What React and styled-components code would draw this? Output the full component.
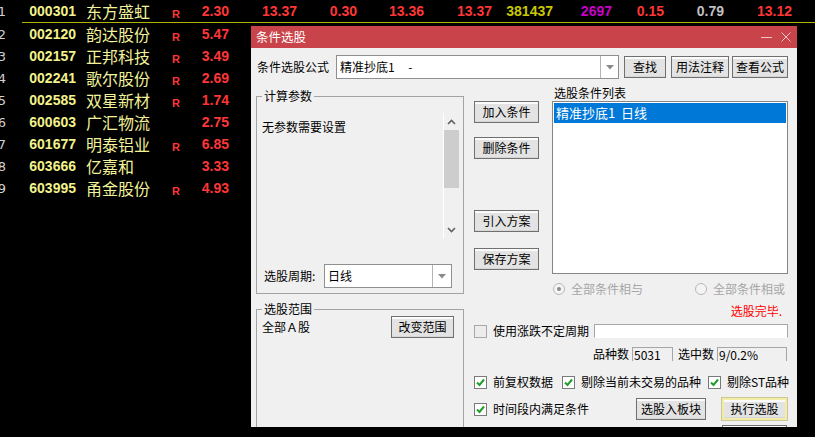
import React from 'react';
import styled, { createGlobalStyle } from 'styled-components';

const CJK = `"Noto Sans CJK SC", "Noto Sans", sans-serif`;

const GlobalStyle = createGlobalStyle`
  html, body {
    margin: 0;
    padding: 0;
    background: #000;
  }
  body {
    width: 815px;
    height: 437px;
    overflow: hidden;
  }
`;

const quotes = [
  { no: 1, code: '000301', name: '东方盛虹', r: true, price: '2.30' },
  { no: 2, code: '002120', name: '韵达股份', r: true, price: '5.47' },
  { no: 3, code: '002157', name: '正邦科技', r: true, price: '3.49' },
  { no: 4, code: '002241', name: '歌尔股份', r: true, price: '2.69' },
  { no: 5, code: '002585', name: '双星新材', r: true, price: '1.74' },
  { no: 6, code: '600603', name: '广汇物流', r: false, price: '2.75' },
  { no: 7, code: '601677', name: '明泰铝业', r: true, price: '6.85' },
  { no: 8, code: '603666', name: '亿嘉和', r: false, price: '3.33' },
  { no: 9, code: '603995', name: '甬金股份', r: true, price: '4.93' },
];

// extra columns only visible on the first row
const firstRowExtra = [
  { v: '13.37', c: '#ff3636' },
  { v: '0.30', c: '#ff3636' },
  { v: '13.36', c: '#ff3636' },
  { v: '13.37', c: '#ff3636' },
  { v: '381437', c: '#c8c800' },
  { v: '2697', c: '#c800c8' },
  { v: '0.15', c: '#ff3636' },
  { v: '0.79', c: '#c0c0c0' },
  { v: '13.12', c: '#ff3636' },
];

const Checkbox = ({ checked }) => (
  <CheckBox $checked={checked}>
    {checked && (
      <svg width="11" height="11" viewBox="0 0 11 11">
        <polyline points="2,5.5 4.5,8 9,2.5" fill="none" stroke="#1f9e2a" strokeWidth="2" />
      </svg>
    )}
  </CheckBox>
);

const Arrow = () => (
  <svg width="8" height="5" viewBox="0 0 8 5">
    <polygon points="0,0 8,0 4,4.5" fill="#8a8a8a" />
  </svg>
);

const Combo = ({ width, arrowWidth, children }) => (
  <ComboBox $w={width}>
    <ComboText>{children}</ComboText>
    <ComboArrow $w={arrowWidth}>
      <Arrow />
    </ComboArrow>
  </ComboBox>
);

const App = () => {
  return (
    <Screen>
      <GlobalStyle />
      <Quotes>
        {quotes.map((q, i) => (
          <React.Fragment key={q.code}>
            <QuoteRow>
              <RowNo>{q.no}</RowNo>
              <Code>{q.code}</Code>
              <Name>{q.name}</Name>
              <Flag>{q.r ? 'R' : ''}</Flag>
              <Num $c="#ff3636">{q.price}</Num>
              {i === 0 &&
                firstRowExtra.map((e, k) => (
                  <Num key={k} $c={e.c}>
                    {e.v}
                  </Num>
                ))}
            </QuoteRow>
            {i === 0 && <Divider />}
          </React.Fragment>
        ))}
      </Quotes>

      <Dialog>
        <TitleBar>
          <span>条件选股</span>
          <WinButtons>
            <svg width="11" height="11" viewBox="0 0 11 11">
              <line x1="0" y1="5.5" x2="11" y2="5.5" stroke="#f3c6c8" strokeWidth="1" />
            </svg>
            <svg width="10" height="10" viewBox="0 0 10 10">
              <line x1="0.5" y1="0.5" x2="9.5" y2="9.5" stroke="#f3c6c8" strokeWidth="1" />
              <line x1="9.5" y1="0.5" x2="0.5" y2="9.5" stroke="#f3c6c8" strokeWidth="1" />
            </svg>
          </WinButtons>
        </TitleBar>

        <Body>
          <FormulaRow>
            <FormulaLabel>条件选股公式</FormulaLabel>
            <Combo width={283} arrowWidth={17}>
              精准抄底1{'     '}-
            </Combo>
            <Btn $w={42} $ml={5}>查找</Btn>
            <Btn $w={58} $ml={5}>用法注释</Btn>
            <Btn $w={56} $ml={3}>查看公式</Btn>
          </FormulaRow>

          <Main>
            <LeftCol>
              <Group $h={198} $mt={11}>
                <GroupTitle>计算参数</GroupTitle>
                <ParamPanel>
                  <ParamText>无参数需要设置</ParamText>
                  <ScrollBar>
                    <ScrollArrow>
                      <svg width="9" height="6" viewBox="0 0 9 6">
                        <polyline points="1,5 4.5,1.5 8,5" fill="none" stroke="#606060" strokeWidth="1.6" />
                      </svg>
                    </ScrollArrow>
                    <Thumb />
                    <Track />
                    <ScrollArrow>
                      <svg width="9" height="6" viewBox="0 0 9 6">
                        <polyline points="1,1 4.5,4.5 8,1" fill="none" stroke="#606060" strokeWidth="1.6" />
                      </svg>
                    </ScrollArrow>
                  </ScrollBar>
                </ParamPanel>
                <PeriodRow>
                  <PeriodLabel>选股周期:</PeriodLabel>
                  <Combo width={128} arrowWidth={18}>
                    日线
                  </Combo>
                </PeriodRow>
              </Group>

              <Group $h={200} $mt={15}>
                <GroupTitle>选股范围</GroupTitle>
                <ScopeRow>
                  <span>全部Ａ股</span>
                  <Btn $w={63}>改变范围</Btn>
                </ScopeRow>
              </Group>
            </LeftCol>

            <RightCol>
              <Upper>
                <ActionCol>
                  <Btn $w={65} $mt={0}>加入条件</Btn>
                  <Btn $w={65} $mt={14}>删除条件</Btn>
                  <Btn $w={65} $mt={51}>引入方案</Btn>
                  <Btn $w={65} $mt={16}>保存方案</Btn>
                </ActionCol>
                <ListCol>
                  <ListLabel>选股条件列表</ListLabel>
                  <ListBox>
                    <ListItem $selected>精准抄底1{'  '}日线</ListItem>
                  </ListBox>
                </ListCol>
              </Upper>

              <RadioRow>
                <RadioOpt>
                  <Radio $checked />
                  全部条件相与
                </RadioOpt>
                <RadioOpt>
                  <Radio />
                  全部条件相或
                </RadioOpt>
              </RadioRow>

              <Status>选股完毕.</Status>

              <CycleRow>
                <Checkbox />
                <OptText>使用涨跌不定周期</OptText>
                <TextInput />
              </CycleRow>

              <CountRow>
                <span>品种数</span>
                <CountBox $w={41} $ml={3}>5031</CountBox>
                <CountLabel>选中数</CountLabel>
                <CountBox $w={70} $ml={3}>9/0.2%</CountBox>
              </CountRow>

              <OptRow>
                <Opt $w={88}>
                  <Checkbox checked />
                  <OptText>前复权数据</OptText>
                </Opt>
                <Opt $w={146}>
                  <Checkbox checked />
                  <OptText>剔除当前未交易的品种</OptText>
                </Opt>
                <Opt>
                  <Checkbox checked />
                  <OptText>剔除ST品种</OptText>
                </Opt>
              </OptRow>

              <RunRow>
                <Opt>
                  <Checkbox checked />
                  <OptText>时间段内满足条件</OptText>
                </Opt>
                <RunButtons>
                  <Btn $w={70}>选股入板块</Btn>
                  <Btn $w={65} $default>执行选股</Btn>
                </RunButtons>
              </RunRow>

              <MoreRow>
                <Btn $w={65}>关闭</Btn>
              </MoreRow>
            </RightCol>
          </Main>
        </Body>
      </Dialog>
    </Screen>
  );
};

export default App;

const Screen = styled.div`
  position: relative;
  width: 815px;
  height: 437px;
  background: #000;
  overflow: hidden;
`;

const Quotes = styled.div`
  display: flex;
  flex-direction: column;
`;

const QuoteRow = styled.div`
  display: grid;
  grid-template-columns: 6px 70px 96px 18px 39px 68px 60px 67px 68px 61px 59px 52px 60px 68px;
  height: 22px;
  align-items: center;
  font: bold 14px 'Liberation Sans', Arial, sans-serif;
  white-space: nowrap;
`;

const Divider = styled.div`
  height: 1px;
  margin-left: 22px;
  background: #b4b400;
`;

const RowNo = styled.div`
  text-align: right;
  color: #d0d0d0;
  font-weight: normal;
  font-family: 'DejaVu Sans', sans-serif;
  font-size: 13px;
  direction: rtl;
`;

const Code = styled.div`
  text-align: right;
  color: #f2f28c;
`;

const Name = styled.div`
  padding-left: 10px;
  font: 16px ${CJK};
  line-height: 22px;
  color: #f2f29a;
`;

const Flag = styled.div`
  padding-top: 5px;
  font: bold 11px 'Liberation Sans', Arial, sans-serif;
  color: #ff3636;
`;

const Num = styled.div`
  text-align: right;
  color: ${(p) => p.$c};
`;

const Dialog = styled.div`
  position: absolute;
  left: 251px;
  top: 26px;
  width: 546px;
  height: 401px;
  background: #f0f0f0;
  overflow: hidden;
  display: flex;
  flex-direction: column;
  font: 12px ${CJK};
  color: #000;
`;

const TitleBar = styled.div`
  flex: none;
  height: 22px;
  display: flex;
  align-items: center;
  padding: 0 6px 0 5px;
  background: #c9444a;
  color: #fff;
  font-size: 12.5px;
  line-height: 22px;
`;

const WinButtons = styled.div`
  margin-left: auto;
  display: flex;
  align-items: center;
  gap: 9px;
`;

const Body = styled.div`
  padding: 0 9px 0 5px;
`;

const FormulaRow = styled.div`
  display: flex;
  align-items: center;
  height: 24px;
  margin-top: 7px;
`;

const FormulaLabel = styled.div`
  width: 80px;
  padding-left: 1px;
  box-sizing: border-box;
  line-height: 16px;
`;

const ComboBox = styled.div`
  box-sizing: border-box;
  width: ${(p) => p.$w}px;
  height: 24px;
  display: flex;
  background: #fff;
  border: 1px solid #8f8f8f;
  flex: none;
`;

const ComboText = styled.div`
  flex: 1;
  padding-left: 3px;
  line-height: 22px;
  white-space: pre;
`;

const ComboArrow = styled.div`
  width: ${(p) => p.$w}px;
  display: flex;
  align-items: center;
  justify-content: center;
  border-left: 1px solid #b4b4b4;
`;

const Btn = styled.button`
  box-sizing: border-box;
  flex: none;
  width: ${(p) => p.$w}px;
  height: 22px;
  margin: ${(p) => p.$mt || 0}px 0 0 ${(p) => p.$ml || 0}px;
  padding: 0;
  font: 12px ${CJK};
  line-height: 18px;
  color: #000;
  border: ${(p) => (p.$default ? '2px solid #f1eda6' : '1px solid #707070')};
  outline: ${(p) => (p.$default ? '1px solid #c9c79a' : 'none')};
  background: #e3e3e3;
  box-shadow: inset 0 2px 0 #fbfbfb, inset 0 -1px 0 #d6d6d6;
`;

const Main = styled.div`
  display: grid;
  grid-template-columns: 208px 314px;
  column-gap: 10px;
  margin-top: 6px;
`;

const LeftCol = styled.div`
  display: flex;
  flex-direction: column;
`;

const Group = styled.div`
  box-sizing: border-box;
  height: ${(p) => p.$h}px;
  margin-top: ${(p) => p.$mt}px;
  border: 1px solid #a3a3a3;
  display: flex;
  flex-direction: column;
  flex: none;
`;

const GroupTitle = styled.div`
  align-self: flex-start;
  height: 16px;
  line-height: 16px;
  margin: -9px 0 0 5px;
  padding: 0 2px;
  background: #f0f0f0;
`;

const ParamPanel = styled.div`
  display: flex;
  height: 125px;
  margin: 9px 4px 0 0;
`;

const ParamText = styled.div`
  flex: 1;
  padding: 5px 0 0 5px;
  line-height: 17px;
`;

const ScrollBar = styled.div`
  width: 15px;
  border-left: 1px solid #fff;
  display: flex;
  flex-direction: column;
`;

const ScrollArrow = styled.div`
  height: 17px;
  display: flex;
  align-items: center;
  justify-content: center;
`;

const Thumb = styled.div`
  height: 58px;
  background: #cdcdcd;
`;

const Track = styled.div`
  flex: 1;
`;

const PeriodRow = styled.div`
  display: flex;
  align-items: center;
  margin-top: 26px;
  height: 24px;
`;

const PeriodLabel = styled.div`
  box-sizing: border-box;
  width: 67px;
  padding-left: 7px;
  line-height: 16px;
`;

const ScopeRow = styled.div`
  display: flex;
  align-items: center;
  justify-content: space-between;
  margin-top: -1px;
  padding: 0 9px 0 5px;
  line-height: 16px;
`;

const RightCol = styled.div`
  display: flex;
  flex-direction: column;
`;

const Upper = styled.div`
  display: grid;
  grid-template-columns: 65px 236px;
  column-gap: 13px;
`;

const ActionCol = styled.div`
  display: flex;
  flex-direction: column;
  padding-top: 16px;
`;

const ListCol = styled.div`
  display: flex;
  flex-direction: column;
`;

const ListLabel = styled.div`
  height: 16px;
  line-height: 16px;
  padding-left: 2px;
`;

const ListBox = styled.div`
  box-sizing: border-box;
  height: 173px;
  border: 1px solid #868686;
  background: #fff;
  padding: 1px;
`;

const ListItem = styled.div`
  height: 20px;
  line-height: 20px;
  padding-left: 2px;
  font-size: 13px;
  white-space: pre;
  color: ${(p) => (p.$selected ? '#fff' : '#000')};
  background: ${(p) => (p.$selected ? '#0078d7' : 'transparent')};
`;

const RadioRow = styled.div`
  display: flex;
  justify-content: space-between;
  align-items: center;
  height: 16px;
  margin-top: 7px;
  padding: 0 3px 0 79px;
  color: #a6a6a6;
`;

const RadioOpt = styled.div`
  display: flex;
  align-items: center;
  gap: 6px;
  line-height: 16px;
`;

const Radio = styled.span`
  box-sizing: border-box;
  width: 12px;
  height: 12px;
  border-radius: 50%;
  border: 1px solid #b8b8b8;
  background: #f4f4f4;
  display: flex;
  align-items: center;
  justify-content: center;
  &::after {
    content: '';
    width: 4px;
    height: 4px;
    border-radius: 50%;
    background: ${(p) => (p.$checked ? '#8a8a8a' : 'transparent')};
  }
`;

const Status = styled.div`
  height: 16px;
  line-height: 16px;
  margin-top: 6px;
  padding-right: 6px;
  text-align: right;
  color: #ff0000;
`;

const CheckBox = styled.span`
  box-sizing: border-box;
  flex: none;
  width: 13px;
  height: 13px;
  display: flex;
  align-items: center;
  justify-content: center;
  border: 1px solid ${(p) => (p.$checked ? '#7a7a7a' : '#a8a8a8')};
  background: ${(p) => (p.$checked ? '#fff' : '#ececec')};
`;

const OptText = styled.span`
  margin-left: 6px;
  line-height: 14px;
  white-space: nowrap;
`;

const CycleRow = styled.div`
  display: flex;
  align-items: center;
  height: 14px;
  margin-top: 5px;
`;

const TextInput = styled.div`
  box-sizing: border-box;
  flex: 1;
  height: 14px;
  margin-left: 5px;
  border: 1px solid #a6a6a6;
  border-bottom-color: #fff;
  background: #fff;
`;

const CountRow = styled.div`
  display: flex;
  align-items: center;
  justify-content: flex-end;
  height: 14px;
  margin-top: 9px;
  padding-right: 1px;
  line-height: 14px;
`;

const CountLabel = styled.span`
  margin-left: 5px;
`;

const CountBox = styled.div`
  box-sizing: border-box;
  width: ${(p) => p.$w}px;
  height: 14px;
  margin-left: ${(p) => p.$ml}px;
  padding-left: 1px;
  border: 1px solid #a6a6a6;
  border-bottom: none;
  line-height: 13px;
`;

const OptRow = styled.div`
  display: flex;
  align-items: center;
  height: 14px;
  margin-top: 14px;
`;

const Opt = styled.div`
  display: flex;
  align-items: center;
  width: ${(p) => (p.$w ? `${p.$w}px` : 'auto')};
  flex: none;
`;

const RunRow = styled.div`
  display: flex;
  align-items: center;
  justify-content: space-between;
  height: 22px;
  margin-top: 9px;
  padding-right: 1px;
`;

const RunButtons = styled.div`
  display: flex;
  gap: 16px;
`;

const MoreRow = styled.div`
  display: flex;
  justify-content: flex-end;
  margin-top: 5px;
  padding-right: 1px;
`;
